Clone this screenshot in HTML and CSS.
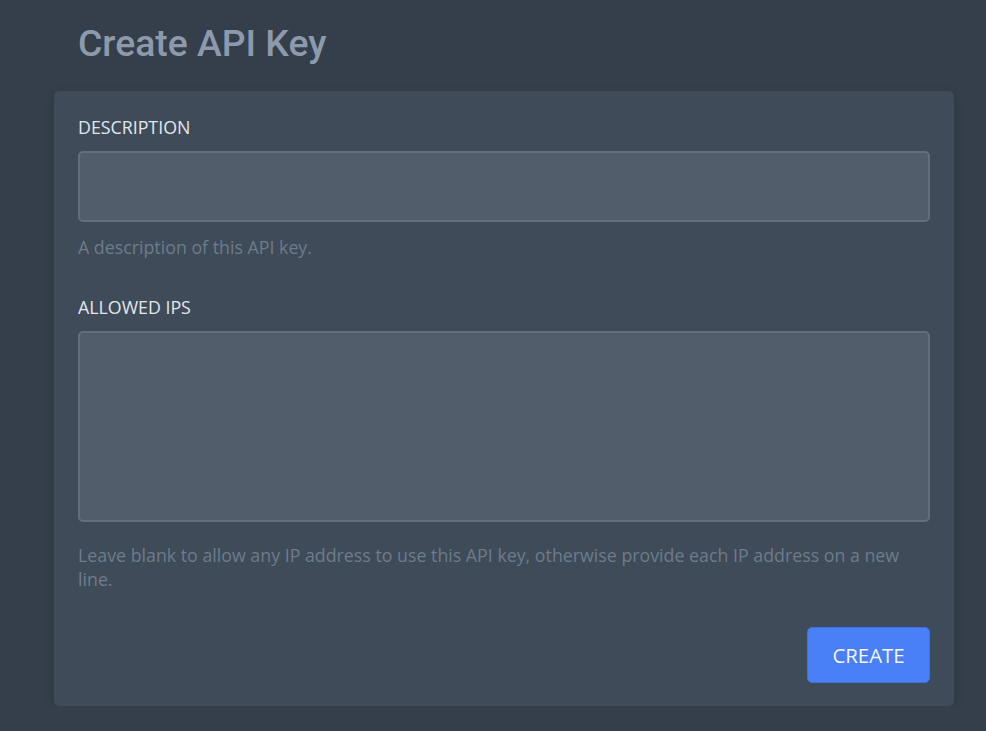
FILE: index.html
```html
<!DOCTYPE html>
<html lang="en">
<head>
    <meta charset="UTF-8">
    <meta name="viewport" content="width=device-width, initial-scale=1.0">
    <title>Create API Key</title>
    <link rel="stylesheet" href="styles.css">
</head>
<body>
    <div class="page">
        <h2 class="page-title">Create API Key</h2>
        <form class="card">
            <div class="field">
                <label for="description">Description</label>
                <input type="text" id="description">
                <p class="help">A description of this API key.</p>
            </div>
            <div class="field">
                <label for="allowedIps">Allowed IPs</label>
                <textarea id="allowedIps"></textarea>
                <p class="help">Leave blank to allow any IP address to use this API key, otherwise provide each IP address on a new line.</p>
            </div>
            <div class="actions">
                <button type="submit">Create</button>
            </div>
        </form>
    </div>
</body>
</html>
```

FILE: styles.css
```css
body {
    margin: 0;
    background-color: #353f4b;
    font-family: 'Open Sans', 'Noto Sans', sans-serif;
    color: #e2e8f0;
}
.page {
    padding: 0 32px 0 54px;
}
.page-title {
    font-family: Roboto, 'Open Sans', sans-serif;
    font-weight: 500;
    font-size: 37.3px;
    line-height: 44px;
    color: #8c9aab;
    margin: 0;
    padding: 21px 0 0 24px;
    height: 91px;
    box-sizing: border-box;
}
.card {
    background: #3f4b58;
    border-radius: 5px;
    padding: 24px 24px 23px;
    box-shadow: 0 3px 10px rgba(0, 0, 0, 0.15);
}
.field label {
    display: block;
    text-transform: uppercase;
    font-size: 17.8px;
    line-height: 24px;
    margin-bottom: 12px;
    color: #e1e7ef;
}
.field input,
.field textarea {
    display: block;
    width: 100%;
    box-sizing: border-box;
    background: #515d6b;
    border: 2px solid #626e7d;
    border-radius: 5px;
    color: #e2e8f0;
    font: inherit;
    padding: 12px;
    resize: none;
}
.field input {
    height: 71px;
}
.field textarea {
    height: 191px;
}
.help {
    font-size: 17.8px;
    line-height: 24px;
    color: #6d7b8c;
    margin: 13px 0 36px;
}
.field textarea + .help {
    margin-top: 21px;
}
.actions {
    display: flex;
    justify-content: flex-end;
}
button {
    background: #4a80f7;
    border: 1px solid #3f70e0;
    border-radius: 5px;
    color: #f4f7fc;
    font: inherit;
    font-size: 20.4px;
    text-transform: uppercase;
    width: 123px;
    height: 56px;
    cursor: pointer;
}
```
